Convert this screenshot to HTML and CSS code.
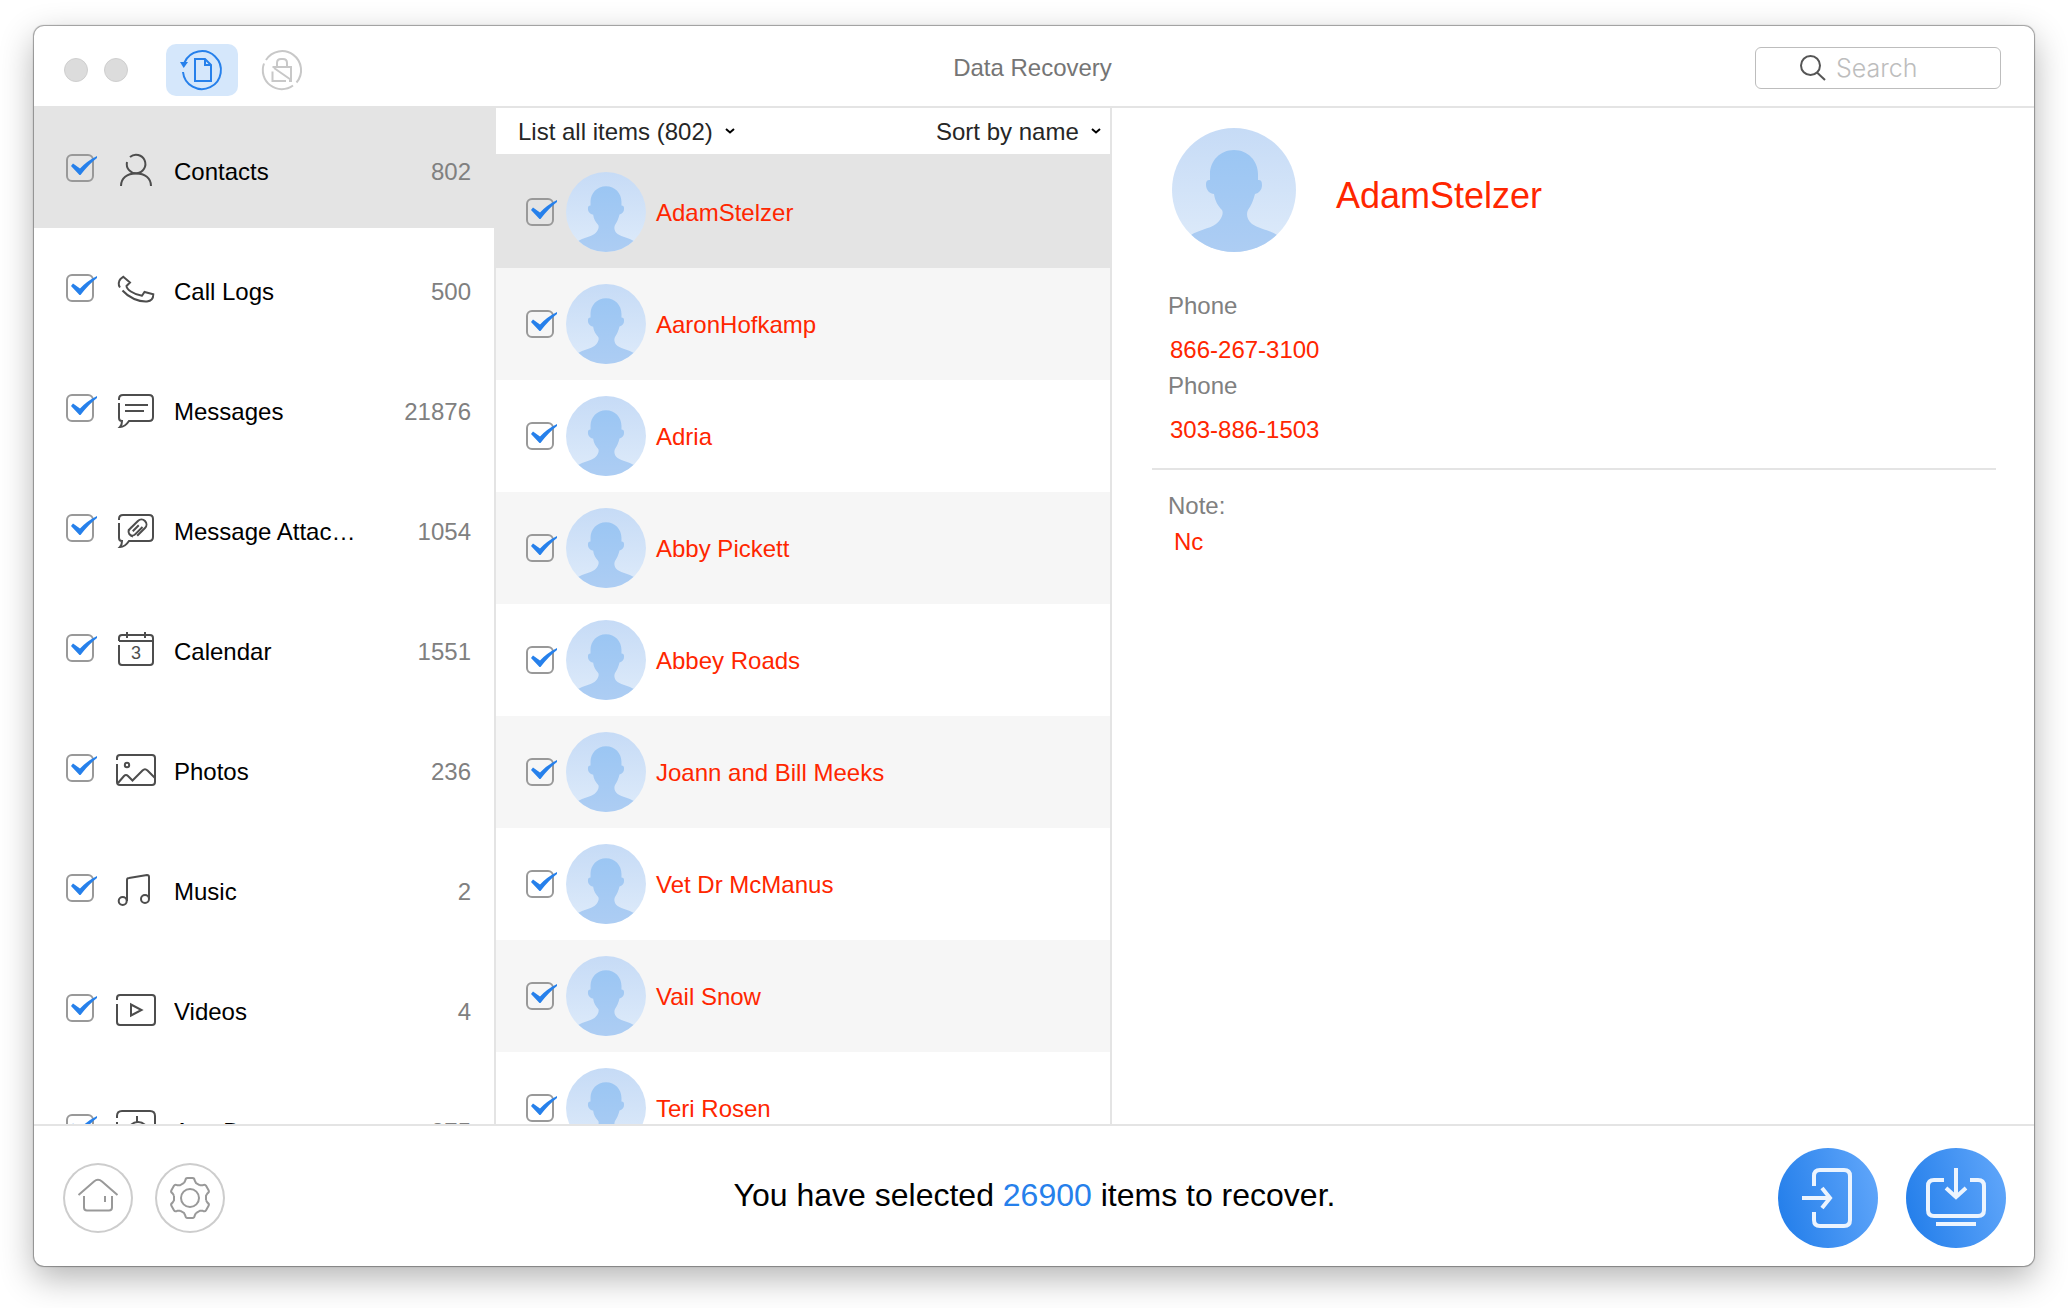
FILE: index.html
```html
<!DOCTYPE html>
<html lang="en">

<head>
  <meta charset="UTF-8">
  <meta name="viewport" content="width=device-width, initial-scale=1.0">
  <title>Data Recovery</title>
  <link rel="stylesheet" href="styles.css">
</head>

<body>
  <!-- shared avatar -->
  <svg class="sprite" aria-hidden="true">
    <defs>
      <linearGradient id="avatar-bg" x1="0" y1="0" x2="0" y2="1">
        <stop offset="0" stop-color="#c6dbf6" />
        <stop offset="1" stop-color="#deebfa" />
      </linearGradient>
      <linearGradient id="avatar-body" x1="0" y1="0" x2="0" y2="1">
        <stop offset="0" stop-color="#9bc6f3" />
        <stop offset="1" stop-color="#adcdf3" />
      </linearGradient>
      <clipPath id="avatar-clip">
        <circle cx="62" cy="62" r="62" />
      </clipPath>
    </defs>
    <symbol id="avatar" viewBox="0 0 124 124">
      <circle cx="62" cy="62" r="62" fill="url(#avatar-bg)" />
      <path clip-path="url(#avatar-clip)" fill="url(#avatar-body)"
        d="M62 22C48 22 38 33 38 46V52C35 52 34 53 34 57C34 62 38 66 42 66C43 73 46 78 50 82C52 86 49 92 44 96C37 101 26 102 19 107V124H105V107C98 102 87 101 80 96C75 92 74 86 76 82C79 78 81 73 83 66C87 65 90 62 90 57C90 53 89 52 86 52V46C86 33 76 22 62 22Z" />
    </symbol>
  </svg>

  <div class="window">
    <header class="titlebar">
      <div class="tools">
        <span class="dot"></span>
        <span class="dot dot_last"></span>
        <button class="tool active" type="button" aria-label="Recover data">
          <svg class="icon" viewBox="0 0 40 40">
            <path d="M2.5 12.5A19 19 0 1 1 1 22" />
            <path class="solid" d="M-2 12H6L1.7 18Z" />
            <path d="M13 9H23L29 15V31H13ZM23 9V15H29" />
          </svg>
        </button>
        <button class="tool" type="button" aria-label="Unlock">
          <svg class="icon" viewBox="0 0 40 40">
            <path d="M4 10A19 19 0 1 1 34.5 32.5M31 35.5A19 19 0 0 1 2 13.5" />
            <path d="M10.5 17H29V31H27M10.5 21.5V31H24M12 18L28.5 29.5M15 17V13Q15 9 19 9H21Q25 9 25 13V17" />
          </svg>
        </button>
      </div>
      <h1 class="title">Data Recovery</h1>
      <label class="search">
        <svg class="search_icon" viewBox="0 0 26 26">
          <circle cx="10.5" cy="10.5" r="9.5" />
          <path d="M17 17.5L25 25" />
        </svg>
        <input type="text" placeholder="Search" aria-label="Search">
      </label>
    </header>

    <main class="content">
      <ul class="sidebar">
        <li class="selected">
          <label>
            <input class="check" type="checkbox" checked>
            <svg class="icon" viewBox="0 0 40 40">
              <path d="M14 7A9.3 9.3 0 1 1 11 12" />
              <path d="M5 36C5 28 11 23.5 20 23.5S35 28 35 36" />
            </svg>
            <span class="name">Contacts</span>
            <span class="count">802</span>
          </label>
        </li>
        <li>
          <label>
            <input class="check" type="checkbox" checked>
            <svg class="icon" viewBox="0 0 40 40">
              <path d="M4 17.5C2 15 2.5 11 4.5 9L7.3 6.7L14 12.5L10.5 16C10.5 19 17 24.5 26 25.7L28.5 22L37.3 24.3C37.3 27 36 31 31 31.5C23 32 13 28 6.5 20.5" />
            </svg>
            <span class="name">Call Logs</span>
            <span class="count">500</span>
          </label>
        </li>
        <li>
          <label>
            <input class="check" type="checkbox" checked>
            <svg class="icon" viewBox="0 0 40 40">
              <path d="M3 10V9Q3 5 7 5H33Q37 5 37 9V27Q37 31 33 31H13Q9 37 4 37Q6 35 6 31Q3 31 3 28V13" />
              <path d="M9 15H32M9 21H28" />
            </svg>
            <span class="name">Messages</span>
            <span class="count">21876</span>
          </label>
        </li>
        <li>
          <label>
            <input class="check" type="checkbox" checked>
            <svg class="icon" viewBox="0 0 40 40">
              <path d="M3 10V9Q3 5 7 5H33Q37 5 37 9V27Q37 31 33 31H13Q9 37 4 37Q6 35 6 31Q3 31 3 28V13" />
              <path transform="rotate(45 20.5 18)" d="M24 13V23.5A3.7 3.7 0 0 1 16.5 23.5V12A5 5 0 0 1 26.5 12V23M20.2 23V14.5M16.5 21V25A5 5 0 0 0 24 26.5" />
            </svg>
            <span class="name">Message Attachments</span>
            <span class="count">1054</span>
          </label>
        </li>
        <li>
          <label>
            <input class="check" type="checkbox" checked>
            <svg class="icon" viewBox="0 0 40 40">
              <path d="M3 11V8Q3 5 6 5H34Q37 5 37 8V32Q37 35 34 35H6Q3 35 3 32V15M3 11H37M11 2V8M29 2V8" />
              <text x="20" y="29" text-anchor="middle">3</text>
            </svg>
            <span class="name">Calendar</span>
            <span class="count">1551</span>
          </label>
        </li>
        <li>
          <label>
            <input class="check" type="checkbox" checked>
            <svg class="icon" viewBox="0 0 40 40">
              <path d="M1 10V8Q1 5 4 5H36Q39 5 39 8V32Q39 35 36 35H4Q1 35 1 32V14" />
              <circle cx="11" cy="15" r="2.2" />
              <path d="M2 33L8 26Q10 24 12 26L16.5 30.5L26.5 20.5Q29 18 31.5 20.5L39 28" />
            </svg>
            <span class="name">Photos</span>
            <span class="count">236</span>
          </label>
        </li>
        <li>
          <label>
            <input class="check" type="checkbox" checked>
            <svg class="icon" viewBox="0 0 40 40">
              <circle cx="6.7" cy="31" r="4" />
              <circle cx="29" cy="29" r="4" />
              <path d="M11 31V10Q11 8 13 8L31 5Q33 5 33 7V29" />
            </svg>
            <span class="name">Music</span>
            <span class="count">2</span>
          </label>
        </li>
        <li>
          <label>
            <input class="check" type="checkbox" checked>
            <svg class="icon" viewBox="0 0 40 40">
              <path d="M1 10V8Q1 5 4 5H36Q39 5 39 8V32Q39 35 36 35H4Q1 35 1 32V14" />
              <path d="M15 14.5V25.5L25.5 20Z" />
            </svg>
            <span class="name">Videos</span>
            <span class="count">4</span>
          </label>
        </li>
        <li>
          <label>
            <input class="check" type="checkbox" checked>
            <svg class="icon" viewBox="0 0 40 40">
              <path d="M1 8V6Q1 1 6 1H34Q39 1 39 6V34Q39 39 34 39H6Q1 39 1 34V12" />
              <circle cx="22" cy="22" r="10" />
              <path d="M21 6V12" />
            </svg>
            <span class="name">App Documents</span>
            <span class="count">875</span>
          </label>
        </li>
      </ul>

      <section class="list">
        <div class="filters">
          <select aria-label="Filter">
            <option>List all items (802)</option>
          </select>
          <select aria-label="Sort">
            <option>Sort by name</option>
          </select>
        </div>
        <ul class="people">
          <li class="selected">
            <label>
              <input class="check" type="checkbox" checked>
              <svg class="avatar"><use href="#avatar" /></svg>
              <span class="name">AdamStelzer</span>
            </label>
          </li>
          <li>
            <label>
              <input class="check" type="checkbox" checked>
              <svg class="avatar"><use href="#avatar" /></svg>
              <span class="name">AaronHofkamp</span>
            </label>
          </li>
          <li>
            <label>
              <input class="check" type="checkbox" checked>
              <svg class="avatar"><use href="#avatar" /></svg>
              <span class="name">Adria</span>
            </label>
          </li>
          <li>
            <label>
              <input class="check" type="checkbox" checked>
              <svg class="avatar"><use href="#avatar" /></svg>
              <span class="name">Abby Pickett</span>
            </label>
          </li>
          <li>
            <label>
              <input class="check" type="checkbox" checked>
              <svg class="avatar"><use href="#avatar" /></svg>
              <span class="name">Abbey Roads</span>
            </label>
          </li>
          <li>
            <label>
              <input class="check" type="checkbox" checked>
              <svg class="avatar"><use href="#avatar" /></svg>
              <span class="name">Joann and Bill Meeks</span>
            </label>
          </li>
          <li>
            <label>
              <input class="check" type="checkbox" checked>
              <svg class="avatar"><use href="#avatar" /></svg>
              <span class="name">Vet Dr McManus</span>
            </label>
          </li>
          <li>
            <label>
              <input class="check" type="checkbox" checked>
              <svg class="avatar"><use href="#avatar" /></svg>
              <span class="name">Vail Snow</span>
            </label>
          </li>
          <li>
            <label>
              <input class="check" type="checkbox" checked>
              <svg class="avatar"><use href="#avatar" /></svg>
              <span class="name">Teri Rosen</span>
            </label>
          </li>
        </ul>
      </section>

      <section class="detail">
        <div class="person">
          <svg class="avatar avatar_big"><use href="#avatar" /></svg>
          <h2>AdamStelzer</h2>
        </div>
        <dl class="phones">
          <dt>Phone</dt>
          <dd>866-267-3100</dd>
          <dt>Phone</dt>
          <dd>303-886-1503</dd>
        </dl>
        <dl class="note">
          <dt>Note:</dt>
          <dd>Nc</dd>
        </dl>
      </section>
    </main>

    <footer class="footer">
      <div class="nav">
        <button class="round" type="button" aria-label="Home">
          <svg viewBox="-35 -35 70 70">
            <path d="M-19.5 -3L-4 -16.5Q0 -20 4 -16.5L19.5 -3M-14 -2V9.5Q-14 12.5 -11 12.5H11Q14 12.5 14 9.5V-2M7 -2V4" />
          </svg>
        </button>
        <button class="round" type="button" aria-label="Settings">
          <svg viewBox="-35 -35 70 70">
            <defs>
              <path id="tooth" d="M-6 -15L-4.7 -17.5Q-4.5 -20 -2.5 -20H2.5Q4.5 -20 4.7 -17.5L6 -15L10 -12.7" />
            </defs>
            <use href="#tooth" />
            <use href="#tooth" transform="rotate(60)" />
            <use href="#tooth" transform="rotate(120)" />
            <use href="#tooth" transform="rotate(180)" />
            <use href="#tooth" transform="rotate(240)" />
            <use href="#tooth" transform="rotate(300)" />
            <circle r="9" />
          </svg>
        </button>
      </div>
      <p class="status">You have selected <span>26900</span> items to recover.</p>
      <div class="actions">
        <button class="primary" type="button" aria-label="Recover to device">
          <svg viewBox="-50 -50 100 100">
            <path d="M-14 -12V-22Q-14 -28 -8 -28H16Q22 -28 22 -22V22Q22 28 16 28H-8Q-14 28 -14 22V14M-26 0H1M-6 -10L2 0L-6 10" />
          </svg>
        </button>
        <button class="primary" type="button" aria-label="Recover to computer">
          <svg viewBox="-50 -50 100 100">
            <path d="M-12 -18H-22Q-28 -18 -28 -12V12Q-28 18 -22 18H22Q28 18 28 12V-12Q28 -18 22 -18H14M0 -30V-2M-10 -10L0 -1L10 -10M-20 26H20" />
          </svg>
        </button>
      </div>
    </footer>
  </div>
</body>

</html>
```
FILE: styles.css
```css
* {
  margin: 0;
  padding: 0;
  box-sizing: border-box;
}

body {
  display: flex;
  height: 100vh;
  padding: 26px 34px 42px;
  background-color: #fff;
  color: #000;
  font-family: "Liberation Sans", Arial, sans-serif;
  font-size: 24px;
}

ul {
  list-style: none;
}

button,
input,
select {
  border: none;
  background: none;
  font: inherit;
}

svg {
  display: block;
  flex: none;
  overflow: visible;
}

.sprite {
  position: absolute;
  width: 0;
  height: 0;
}

.window {
  flex: 1;
  display: flex;
  flex-direction: column;
  min-width: 0;
  border-radius: 10px;
  background-color: #fff;
  box-shadow: 0 0 1px 1px rgba(0, 0, 0, 0.35), 0 12px 34px rgba(0, 0, 0, 0.3);
}

/* title bar */
.titlebar {
  display: grid;
  grid-template-columns: 1fr auto 1fr;
  align-items: center;
  height: 82px;
  padding: 4px 33px 0 30px;
  border-bottom: 2px solid #e4e4e4;
}

.tools {
  display: flex;
  align-items: center;
  padding-top: 4px;
}

.dot {
  width: 24px;
  height: 24px;
  margin-right: 16px;
  border: 1px solid #cfcfcf;
  border-radius: 50%;
  background-color: #dcdcdc;
}

.dot_last {
  margin-right: 38px;
}

.tool {
  display: flex;
  align-items: center;
  justify-content: center;
  width: 72px;
  height: 52px;
  margin-right: 8px;
  border-radius: 10px;
}

.tool .icon {
  stroke: #c8c8c8;
}

.tool.active {
  background-color: #d5e7fb;
}

.tool.active .icon {
  stroke: #2680eb;
}

.tool.active .solid {
  fill: #2680eb;
  stroke: none;
}

.title {
  color: #757575;
  font-size: 24px;
  font-weight: normal;
}

.search {
  display: flex;
  align-items: center;
  justify-self: end;
  gap: 10px;
  width: 246px;
  height: 42px;
  padding-left: 44px;
  border: 1px solid #bdbdbd;
  border-radius: 6px;
}

.search_icon {
  width: 26px;
  height: 26px;
  fill: none;
  stroke: #555;
  stroke-width: 2;
}

.search input {
  width: 140px;
  font-family: Inter, Roboto, sans-serif;
  font-size: 25px;
  font-weight: 300;
  outline: none;
}

.search input::placeholder {
  color: #bdbdbd;
}

/* three columns */
.content {
  flex: 1;
  display: grid;
  grid-template-columns: 231fr 308fr 461fr;
  grid-template-rows: minmax(0, 1fr);
  min-height: 0;
}

.icon {
  width: 40px;
  height: 40px;
  fill: none;
  stroke: #4d4d4d;
  stroke-width: 2;
}

.icon text {
  fill: #4d4d4d;
  stroke: none;
  font-size: 18px;
}

.check {
  appearance: none;
  flex: none;
  width: 32px;
  height: 28px;
  background: url("data:image/svg+xml,%3Csvg xmlns='http://www.w3.org/2000/svg' width='32' height='28'%3E%3Crect x='1' y='1' width='26' height='26' rx='5' fill='none' stroke='%23999' stroke-width='2'/%3E%3C/svg%3E") no-repeat;
}

.check:checked {
  background-image: url("data:image/svg+xml,%3Csvg xmlns='http://www.w3.org/2000/svg' width='32' height='28'%3E%3Crect x='1' y='1' width='26' height='26' rx='5' fill='none' stroke='%23999' stroke-width='2'/%3E%3Cpath d='M5 12L7 9.5L14 14.500Q21 7 31 2V4Q23 10 14.500 21H13.500Z' fill='%232680eb'/%3E%3C/svg%3E");
}

.sidebar {
  overflow: hidden;
  border-right: 2px solid #e4e4e4;
}

.sidebar label {
  display: flex;
  align-items: center;
  gap: 18px;
  height: 120px;
  padding: 0 23px 0 32px;
}

.sidebar .icon {
  margin-top: 4px;
}

.sidebar .name {
  width: 190px;
  overflow: hidden;
  text-overflow: ellipsis;
  white-space: nowrap;
}

.sidebar .name,
.sidebar .count {
  padding-top: 8px;
}

.sidebar .count {
  margin-left: auto;
  color: #808080;
}

.selected {
  background-color: #e4e4e4;
}

.list {
  display: flex;
  flex-direction: column;
  overflow: hidden;
  border-right: 2px solid #e4e4e4;
}

.filters {
  display: flex;
  flex: none;
  align-items: center;
  justify-content: space-between;
  height: 48px;
  padding: 0 9px 0 22px;
  border-bottom: 2px solid #e4e4e4;
}

.filters select {
  appearance: none;
  padding-right: 22px;
  color: #262626;
  background: url("data:image/svg+xml,%3Csvg xmlns='http://www.w3.org/2000/svg' width='10' height='6'%3E%3Cpath d='M1 1L5 4.500L9 1' fill='none' stroke='%23000' stroke-width='2'/%3E%3C/svg%3E") no-repeat right center;
}

.people label {
  display: flex;
  align-items: center;
  height: 112px;
  padding-left: 30px;
  color: #ff2600;
}

.people .name {
  padding-top: 2px;
}

.people li:nth-child(even) {
  background-color: #f6f6f6;
}

.avatar {
  width: 80px;
  height: 80px;
  margin: 0 10px 0 8px;
}

.avatar_big {
  width: 124px;
  height: 124px;
  margin: 0 40px 0 0;
}

.detail {
  padding: 20px 38px 0 40px;
  overflow: hidden;
}

.person {
  display: flex;
  align-items: center;
  padding-left: 20px;
  margin-bottom: 36px;
}

.person h2 {
  padding-top: 12px;
  color: #ff2600;
  font-size: 36px;
  font-weight: normal;
}

.detail dl {
  padding-left: 16px;
  line-height: 36px;
}

.detail dt {
  color: #808080;
}

.detail dd {
  padding-left: 2px;
  color: #ff2600;
}

.phones {
  padding-bottom: 20px;
  border-bottom: 2px solid #e4e4e4;
}

.phones dt {
  margin-bottom: 8px;
}

.note {
  padding-top: 18px;
}

.detail .note dd {
  padding-left: 6px;
}

/* footer */
.footer {
  display: grid;
  grid-template-columns: 1fr auto 1fr;
  align-items: center;
  height: 142px;
  padding: 4px 28px 0 29px;
  border-top: 2px solid #e4e4e4;
}

.nav,
.actions {
  display: flex;
  gap: 22px;
}

.actions {
  justify-self: end;
  gap: 28px;
}

.round {
  width: 70px;
  height: 70px;
  border-radius: 50%;
  box-shadow: inset 0 0 0 2px #cdcdcd;
}

.round svg {
  fill: none;
  stroke: #999;
  stroke-width: 2;
}

.primary {
  width: 100px;
  height: 100px;
  border-radius: 50%;
  background: linear-gradient(75deg, #2680eb 10%, #60a6fa 95%);
}

.primary svg {
  fill: none;
  stroke: #ecf4fe;
  stroke-width: 4;
}

.status {
  padding-bottom: 6px;
  font-size: 32px;
}

.status span {
  color: #2680eb;
}
```
